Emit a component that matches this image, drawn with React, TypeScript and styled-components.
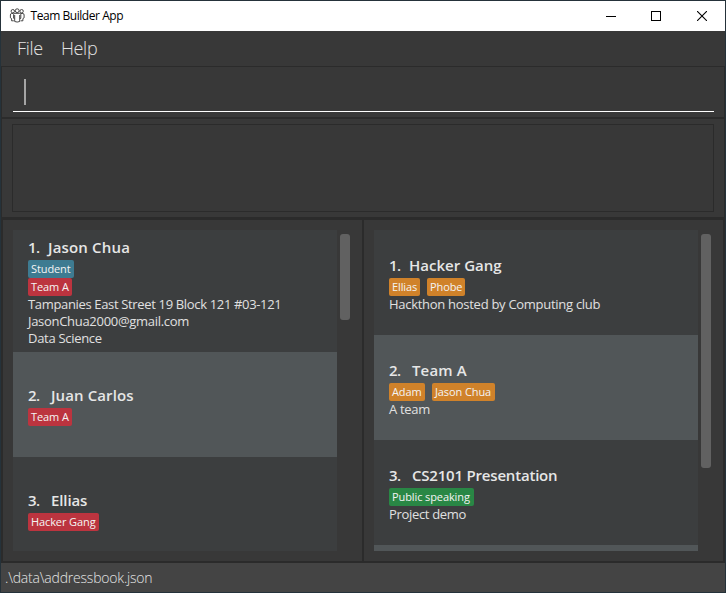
import React from "react";
import styled, { createGlobalStyle } from "styled-components";

const GlobalStyle = createGlobalStyle`
  * { box-sizing: border-box; }
  html, body { margin: 0; overflow: hidden; }
  body { background: #383838; font-family: "Open Sans", "Noto Sans", sans-serif; }
`;

const Window = styled.div`
  width: 726px;
  height: 593px;
  display: flex;
  flex-direction: column;
  border: 1px solid #25323a;
  background: #383838;
  white-space: nowrap;
`;

const TitleBar = styled.header`
  flex: none;
  height: 30px;
  display: flex;
  align-items: center;
  padding-left: 8px;
  background: #fff;
  color: #000;
`;

const Title = styled.span`
  flex: 1;
  margin-left: 5px;
  padding-left: 0.5px;
  font: 12px/16px "Open Sans", sans-serif;
  letter-spacing: -0.45px;
`;

const WindowButton = styled.span<{ $w: number }>`
  width: ${(p) => p.$w}px;
  height: 30px;
  display: flex;
  align-items: center;
  justify-content: center;
`;

const MenuBar = styled.nav`
  flex: none;
  height: 35px;
  display: flex;
  align-items: center;
  gap: 18px;
  padding: 0 16px;
`;

const MenuItem = styled.span`
  font: 300 18px/24px "Open Sans", sans-serif;
  letter-spacing: -0.3px;
  color: #e3e3e3;
  position: relative;
  top: -1px;
`;

const CommandPane = styled.section`
  flex: none;
  height: 53px;
  padding: 8px 10px 6px 11px;
  border: 1px solid #2b2b2b;
  border-bottom-width: 2px;
`;

const CommandField = styled.div`
  height: 37px;
  padding: 4px 11px;
  border-bottom: 1px solid #fff;
`;

const Caret = styled.div`
  width: 2px;
  height: 26px;
  background: #a5a5a5;
`;

const ResultPane = styled.section`
  flex: none;
  height: 101px;
  padding: 5px 10px;
  border: solid #2b2b2b;
  border-width: 0 1px 3px;
`;

const ResultBox = styled.div`
  height: 88px;
  border: 1px solid #2b2b2b;
`;

const Lists = styled.main`
  flex: none;
  height: 343px;
  display: flex;
  border: 2px solid #2b2b2b;
  border-top: 0;
`;

const ListPane = styled.section<{ $w: number; $right?: boolean }>`
  flex: none;
  width: ${(p) => p.$w}px;
  display: flex;
  gap: 3px;
  padding: 10px 0 10px 10px;
  border-left: ${(p) => (p.$right ? "2px solid #2b2b2b" : "0")};
`;

const List = styled.div`
  width: 324px;
  height: 321px;
  overflow: hidden;
`;

const ScrollThumb = styled.div<{ $h: number }>`
  width: 10px;
  height: ${(p) => p.$h}px;
  margin-top: 4px;
  border-radius: 3px;
  background: #616161;
`;

const CardBox = styled.article<{ $h: number; $alt: boolean }>`
  height: ${(p) => p.$h}px;
  padding: 0 15px;
  display: flex;
  flex-direction: column;
  justify-content: center;
  background: ${(p) => (p.$alt ? "#515658" : "#3c3e3f")};
`;

const Heading = styled.h2<{ $ls: number }>`
  display: flex;
  margin: 0;
  font: 600 15px/25px "Open Sans", sans-serif;
  letter-spacing: ${(p) => p.$ls}px;
  color: #e6e6e6;
`;

const Index = styled.span<{ $w: number }>`
  width: ${(p) => p.$w}px;
  letter-spacing: -0.5px;
`;

const TagRow = styled.div`
  display: flex;
  gap: 7px;
`;

const Tag = styled.span<{ $bg: string; $w: number }>`
  width: ${(p) => p.$w}px;
  height: 18px;
  padding-left: 3px;
  border-radius: 2px;
  background: ${(p) => p.$bg};
  color: #f4f4f4;
  font: 11px/18px "Open Sans", sans-serif;
  letter-spacing: -0.1px;
`;

const Detail = styled.p<{ $ls: number }>`
  margin: 0;
  font: 13px/17px "Open Sans", sans-serif;
  letter-spacing: ${(p) => p.$ls}px;
  color: #e0e0e0;
`;

const StatusBar = styled.footer`
  flex: 1;
  padding-left: 4px;
  background: #444;
  color: #e4e4e4;
  font: 300 14px/29px "Open Sans", sans-serif;
  letter-spacing: -0.2px;
`;

type TagInfo = { text: string; bg: string; w: number };
type Line = { text: string; ls: number };
type CardInfo = {
  index: number;
  indexWidth: number;
  name: string;
  ls: number;
  height: number;
  tagRows: TagInfo[][];
  lines: Line[];
};

const BLUE = "#3e7b91";
const RED = "#bc343f";
const ORANGE = "#d0822a";
const GREEN = "#298745";

const people: CardInfo[] = [
  {
    index: 1, indexWidth: 20, name: "Jason Chua", ls: 0.17, height: 122,
    tagRows: [[{ text: "Student", bg: BLUE, w: 46 }], [{ text: "Team A", bg: RED, w: 44 }]],
    lines: [
      { text: "Tampanies East Street 19 Block 121 #03-121", ls: -0.34 },
      { text: "JasonChua2000@gmail.com", ls: -0.3 },
      { text: "Data Science", ls: -0.3 },
    ],
  },
  { index: 2, indexWidth: 23, name: "Juan Carlos", ls: 0.1, height: 105, tagRows: [[{ text: "Team A", bg: RED, w: 44 }]], lines: [] },
  { index: 3, indexWidth: 23, name: "Ellias", ls: -0.1, height: 105, tagRows: [[{ text: "Hacker Gang", bg: RED, w: 71 }]], lines: [] },
];

const teams: CardInfo[] = [
  {
    index: 1, indexWidth: 20, name: "Hacker Gang", ls: 0.02, height: 105,
    tagRows: [[{ text: "Ellias", bg: ORANGE, w: 31 }, { text: "Phobe", bg: ORANGE, w: 38 }]],
    lines: [{ text: "Hackthon hosted by Computing club", ls: -0.28 }],
  },
  {
    index: 2, indexWidth: 23, name: "Team A", ls: 0.15, height: 105,
    tagRows: [[{ text: "Adam", bg: ORANGE, w: 36 }, { text: "Jason Chua", bg: ORANGE, w: 63 }]],
    lines: [{ text: "A team", ls: -0.3 }],
  },
  {
    index: 3, indexWidth: 23, name: "CS2101 Presentation", ls: -0.2, height: 105,
    tagRows: [[{ text: "Public speaking", bg: GREEN, w: 85 }]],
    lines: [{ text: "Project demo", ls: -0.32 }],
  },
];

const Card = ({ card }: { card: CardInfo }) => (
  <CardBox $h={card.height} $alt={card.index % 2 === 0}>
    <Heading $ls={card.ls}>
      <Index $w={card.indexWidth}>{card.index}.</Index>
      {card.name}
    </Heading>
    {card.tagRows.map((row, i) => (
      <TagRow key={i}>
        {row.map((t) => (
          <Tag key={t.text} $bg={t.bg} $w={t.w}>{t.text}</Tag>
        ))}
      </TagRow>
    ))}
    {card.lines.map((l) => (
      <Detail key={l.text} $ls={l.ls}>{l.text}</Detail>
    ))}
  </CardBox>
);

const PeopleIcon = () => (
  <svg width="16" height="16" viewBox="0 0 16 16" fill="none" stroke="#333" strokeWidth="0.9">
    <circle cx="3.8" cy="3.2" r="1.7" />
    <circle cx="8.2" cy="2.7" r="1.9" />
    <circle cx="12.6" cy="3.2" r="1.7" />
    <path d="M4.5 5.5H2.6Q1.4 5.5 1.4 7v2.8l1.2.8v2.2h2.2M11.7 5.5h2.2Q15.1 5.5 15.1 7v2.8l-1.2.8v2.2h-2.2" />
    <path d="M5.8 5.3h4.8q1.2 0 1.2 1.4v3.6l-1.1.8v2.4q-2.5 1.1-5 0v-2.4l-1.1-.8V6.7q0-1.4 1.2-1.4z" />
    <path d="M5.7 7v4M10.7 7v4" />
  </svg>
);

export default function App() {
  return (
    <>
      <GlobalStyle />
      <Window>
        <TitleBar>
          <PeopleIcon />
          <Title>Team Builder App</Title>
          <WindowButton $w={44}>
            <svg width="10" height="10"><path d="M0 5.5h10" stroke="#000" /></svg>
          </WindowButton>
          <WindowButton $w={46}>
            <svg width="10" height="10"><rect x=".5" y=".5" width="9" height="9" fill="none" stroke="#000" /></svg>
          </WindowButton>
          <WindowButton $w={46}>
            <svg width="10" height="10"><path d="M0 0l10 10M10 0L0 10" stroke="#000" strokeWidth="1.1" /></svg>
          </WindowButton>
        </TitleBar>
        <MenuBar>
          <MenuItem>File</MenuItem>
          <MenuItem>Help</MenuItem>
        </MenuBar>
        <CommandPane>
          <CommandField><Caret /></CommandField>
        </CommandPane>
        <ResultPane><ResultBox /></ResultPane>
        <Lists>
          <ListPane $w={359}>
            <List>{people.map((c) => <Card key={c.index} card={c} />)}</List>
            <ScrollThumb $h={86} />
          </ListPane>
          <ListPane $w={361} $right>
            <List>
              {teams.map((c) => <Card key={c.index} card={c} />)}
              <CardBox $h={105} $alt />
            </List>
            <ScrollThumb $h={234} />
          </ListPane>
        </Lists>
        <StatusBar>.\data\addressbook.json</StatusBar>
      </Window>
    </>
  );
}
